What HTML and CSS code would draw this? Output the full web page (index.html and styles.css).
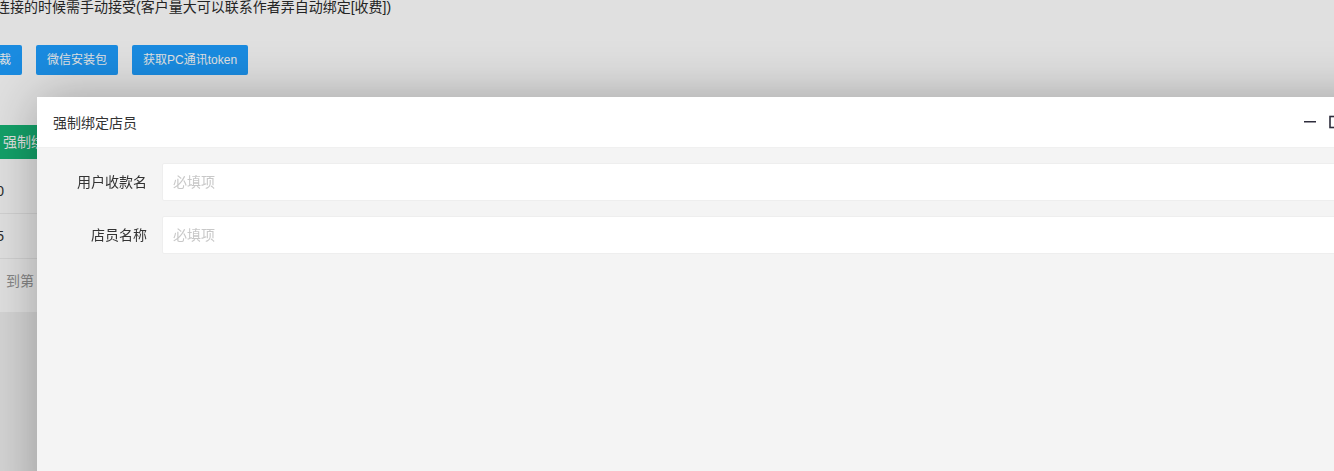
FILE: index.html
```html
<!DOCTYPE html>
<html lang="zh-CN">
<head>
    <meta charset="UTF-8">
    <meta name="viewport" content="width=device-width, initial-scale=1.0">
    <title>店员管理</title>
    <link rel="stylesheet" href="styles.css">
</head>
<body>
    <div class="page-card">
        <p class="notice">在连接的时候需手动接受(客户量大可以联系作者弄自动绑定[收费])</p>
        <div class="toolbar">
            <button class="btn btn-sm">剪裁</button>
            <button class="btn btn-sm">微信安装包</button>
            <button class="btn btn-sm">获取PC通讯token</button>
        </div>
        <div class="table-tools">
            <button class="btn btn-green">强制绑定店员</button>
        </div>
        <div class="table">
            <div class="table-row"><span class="cell">100</span></div>
            <div class="table-row"><span class="cell">25</span></div>
            <div class="pager">到第 <span>1</span> 页</div>
        </div>
    </div>

    <div class="shade"></div>

    <div class="layer">
        <div class="layer-title">
            <span>强制绑定店员</span>
            <div class="setwin">
                <svg width="16" height="16" viewBox="0 0 16 16"><rect x="1" y="7" width="12" height="1.5" fill="#2e2d3c"/></svg>
                <svg width="16" height="16" viewBox="0 0 16 16"><rect x="1" y="2.5" width="12" height="11" fill="none" stroke="#2e2d3c" stroke-width="1.6"/></svg>
                <svg width="16" height="16" viewBox="0 0 16 16"><path d="M3 3 L13 13 M13 3 L3 13" stroke="#2e2d3c" stroke-width="1.6"/></svg>
            </div>
        </div>
        <div class="layer-content">
            <form class="form">
                <div class="form-item">
                    <label class="form-label">用户收款名</label>
                    <input class="form-input" type="text" placeholder="必填项">
                </div>
                <div class="form-item">
                    <label class="form-label">店员名称</label>
                    <input class="form-input" type="text" placeholder="必填项">
                </div>
            </form>
        </div>
    </div>
</body>
</html>
```

FILE: styles.css
```css
html, body {
    margin: 0;
    padding: 0;
    height: 100%;
    overflow: hidden;
}

body {
    background-color: #f2f2f2;
    font-family: "Liberation Sans", "Noto Sans CJK SC", sans-serif;
    font-size: 14px;
    color: #333;
}

.page-card {
    background: #fff;
    height: 312px;
    overflow: hidden;
}

.notice {
    margin: -1px 0 0 -18px;
    line-height: 16px;
    white-space: nowrap;
    color: #2a2a2a;
}

.toolbar {
    display: flex;
    gap: 14px;
    margin: 30px 0 0 -24px;
}

.btn {
    border: none;
    border-radius: 2px;
    color: #fff;
    font-family: inherit;
    cursor: pointer;
    white-space: nowrap;
}

.btn-sm {
    height: 30px;
    line-height: 30px;
    padding: 0 11px;
    font-size: 12px;
    background-color: #1e9fff;
}

.table-tools {
    margin: 50px 0 0 -12px;
}

.btn-green {
    height: 34px;
    line-height: 34px;
    padding: 0 15px;
    font-size: 14px;
    background-color: #16b777;
}

.table {
    margin-top: 10px;
}

.table-row {
    height: 44px;
    line-height: 44px;
    border-bottom: 1px solid #eee;
    margin-left: -56px;
}

.cell {
    display: inline-block;
    width: 60px;
    text-align: right;
}

.pager {
    padding: 12px 0 0 6px;
    line-height: 20px;
    color: #999;
}

.pager span {
    display: none;
}

.shade {
    position: fixed;
    top: 0;
    left: 0;
    right: 0;
    bottom: 0;
    background-color: rgba(0, 0, 0, 0.12);
}

.layer {
    position: absolute;
    left: 37px;
    top: 97px;
    width: 1351px;
    height: 420px;
    background: #f4f4f4;
    box-shadow: 1px 1px 50px rgba(0, 0, 0, 0.3);
}

.layer-title {
    display: flex;
    align-items: center;
    height: 50px;
    padding: 0 17px 0 16px;
    background: #fff;
    border-bottom: 1px solid #f0f0f0;
    color: #333;
}

.setwin {
    display: flex;
    gap: 10px;
    margin-left: auto;
}

.layer-content {
    padding: 15px 0 0 10px;
}

.form-item {
    display: flex;
    margin-bottom: 15px;
}

.form-label {
    width: 100px;
    padding-right: 15px;
    text-align: right;
    line-height: 38px;
    color: #333;
}

.form-input {
    flex: 1;
    height: 38px;
    box-sizing: border-box;
    padding-left: 10px;
    border: 1px solid #eee;
    border-radius: 2px;
    background: #fff;
    font-family: inherit;
    font-size: 14px;
    outline: none;
}

.form-input::placeholder {
    color: #c8c8c8;
}
```
